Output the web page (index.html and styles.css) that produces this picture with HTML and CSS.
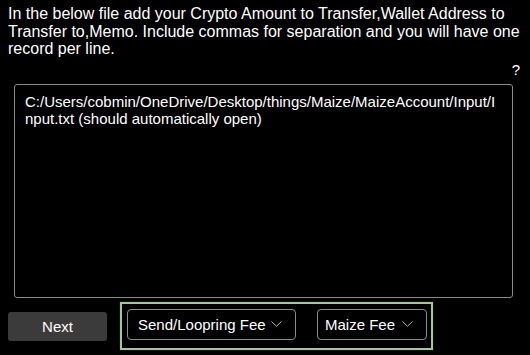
FILE: index.html
```html
<!DOCTYPE html>
<html>
<head>
	<title>Transfer Input</title>
	<meta name="viewport" content="width=device-width,initial-scale=1.0">
	<link rel="stylesheet" href="styles.css">
</head>
<body>
<div class="wrapper">
	<p class="intro">In the below file add your Crypto Amount to Transfer,Wallet Address to Transfer to,Memo. Include commas for separation and you will have one record per line.</p>
	<div class="help_row"><span class="help">?</span></div>
	<textarea class="file_box" readonly>C:/Users/cobmin/OneDrive/Desktop/things/Maize/MaizeAccount/Input/Input.txt (should automatically open)</textarea>
	<div class="footer">
		<button class="next_btn">Next</button>
		<div class="fee_grp">
			<div class="fee_select fee_send">
				<span>Send/Loopring Fee</span>
				<svg width="11" height="6" viewBox="0 0 11 6"><path d="M0.5 0.5 L5.5 5.2 L10.5 0.5" fill="none" stroke="#b5b5b5" stroke-width="1"/></svg>
			</div>
			<div class="fee_select fee_maize">
				<span>Maize Fee</span>
				<svg width="11" height="6" viewBox="0 0 11 6"><path d="M0.5 0.5 L5.5 5.2 L10.5 0.5" fill="none" stroke="#b5b5b5" stroke-width="1"/></svg>
			</div>
		</div>
	</div>
</div>
</body>
</html>
```

FILE: styles.css
```css
*{margin: 0;padding: 0;box-sizing: border-box;font-family: "Liberation Sans", Arial, sans-serif;}
body{background: #000;color: #fff;}
.wrapper{width: 530px;height: 355px;padding: 5px 6px 0 8px;}
.intro{font-size: 16px;line-height: 17.5px;color: #fff;}
.help_row{display: flex;justify-content: flex-end;height: 26px;padding-right: 4px;}
.help{font-size: 15px;line-height: 24px;}
.file_box{display: block;width: 499px;height: 214px;margin-left: 6px;padding: 8px 10px;background: #000;color: #fff;font-size: 15px;line-height: 17.5px;border: 1px solid #8a8a8a;border-radius: 3px;resize: none;outline: none;overflow: hidden;}
.footer{display: flex;align-items: center;margin-top: 4px;}
.next_btn{width: 99px;height: 29px;background: #3b3b3b;color: #fff;border: none;border-radius: 3px;font-size: 15px;margin-top: 1px;}
.fee_grp{display: flex;gap: 21px;margin-left: 13px;width: 313px;height: 48px;padding: 5px 4px 0 5px;border: 2px solid #a6c2a0;box-shadow: 0 0 1px #5d7458;}
.fee_select{display: flex;align-items: center;justify-content: space-between;height: 31px;border: 1px solid #8c8c8c;border-radius: 4px;font-size: 15px;white-space: nowrap;}
.fee_send{width: 169px;padding: 0 13px 0 10px;}
.fee_maize{width: 110px;padding: 0 13px 0 7px;}
```
